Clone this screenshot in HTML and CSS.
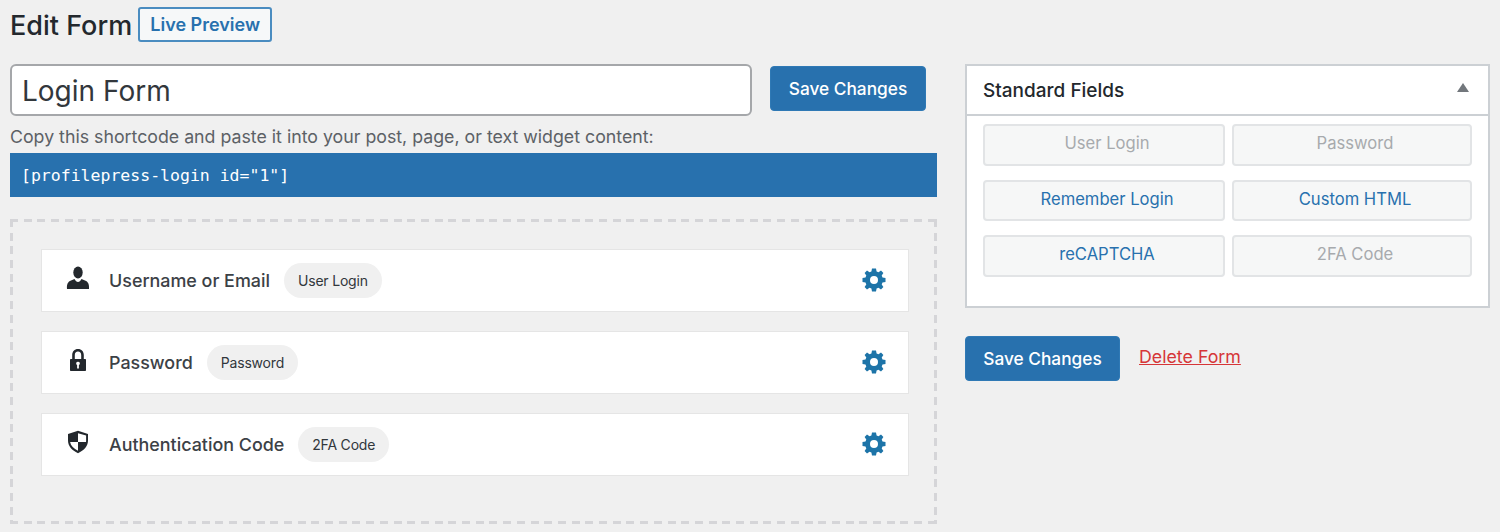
FILE: index.html
```html
<!DOCTYPE html>
<html lang="en-US">
<head>
  <meta charset="UTF-8">
  <title>Edit Form</title>
  <link rel="stylesheet" href="styles.css">
</head>
<body>
  <header class="page-title">
    <h1>Edit Form</h1>
    <a class="preview" href="#">Live Preview</a>
  </header>
  <div class="columns">
    <main class="main">
      <div class="title-row">
        <input class="title-input" type="text" value="Login Form">
        <button class="primary save-top">Save Changes</button>
      </div>
      <p class="hint">Copy this shortcode and paste it into your post, page, or text widget content:</p>
      <div class="shortcode">[profilepress-login id="1"]</div>
      <section class="dropzone">
        <div class="field">
          <svg class="field-icon" viewBox="0 0 24 24"><ellipse cx="12" cy="6.500" rx="4.700" ry="6"/><path d="M1 23c-.4-5 1-7.500 4-8.600l3.500-1.400c1 2 2.200 3 3.500 3s2.500-1 3.500-3l3.500 1.400c3 1.100 4.400 3.600 4 8.600z"/></svg>
          <span class="field-name">Username or Email</span>
          <span class="pill">User Login</span>
          <svg class="gear" viewBox="0 0 24 24"><use href="#gear"/></svg>
        </div>
        <div class="field">
          <svg class="field-icon" viewBox="0 0 24 24"><path fill-rule="evenodd" d="M12 1c3.500 0 5.800 2.600 5.800 6v4H19c.6 0 1 .4 1 1v10c0 .6-.4 1-1 1H5c-.6 0-1-.4-1-1V12c0-.6.4-1 1-1h1.200V7c0-3.400 2.300-6 5.800-6zm0 2.500c-2 0-3.200 1.500-3.200 3.500v4h6.400V7c0-2-1.200-3.500-3.200-3.500zm0 10.200a1.800 1.800 0 0 0-.9 3.400V20.500h1.800v-3.400a1.800 1.800 0 0 0-.9-3.400z"/></svg>
          <span class="field-name">Password</span>
          <span class="pill">Password</span>
          <svg class="gear" viewBox="0 0 24 24"><use href="#gear"/></svg>
        </div>
        <div class="field">
          <svg class="field-icon" viewBox="0 0 24 24"><path fill-rule="evenodd" d="M12 .8L22 4v6.500c0 5.500-4 10-10 12.700C6 20.500 2 16 2 10.500V4zM12 3.300V12h8c.1-.5.1-1 .1-1.500V5.600zM4.100 12c.6 3.800 3.700 6.700 7.900 8.800V12z"/></svg>
          <span class="field-name">Authentication Code</span>
          <span class="pill">2FA Code</span>
          <svg class="gear" viewBox="0 0 24 24"><use href="#gear"/></svg>
        </div>
      </section>
    </main>
    <aside class="side">
      <section class="metabox">
        <h2 class="metabox-head">Standard Fields <span class="arrow"></span></h2>
        <div class="field-buttons">
          <span class="field-btn off">User Login</span>
          <span class="field-btn off">Password</span>
          <span class="field-btn">Remember Login</span>
          <span class="field-btn">Custom HTML</span>
          <span class="field-btn">reCAPTCHA</span>
          <span class="field-btn off">2FA Code</span>
        </div>
      </section>
      <div class="side-actions">
        <button class="primary save-side">Save Changes</button>
        <a class="delete" href="#">Delete Form</a>
      </div>
    </aside>
  </div>
  <svg class="defs" width="0" height="0">
    <symbol id="gear" viewBox="0 0 24 24">
      <path fill-rule="evenodd" d="M10 .5h4l.6 3 1.900.8L19 2.600 21.400 5l-1.700 2.500.8 1.900 3 .6v4l-3 .6-.8 1.900 1.700 2.500L19 21.400l-2.500-1.700-1.900.8-.6 3h-4l-.6-3-1.900-.8L5 21.400 2.600 19l1.700-2.500-.8-1.900-3-.6v-4l3-.6.8-1.900L2.600 5 5 2.600l2.500 1.700 1.900-.8zM12 8a4 4 0 1 0 0 8 4 4 0 0 0 0-8z"/>
    </symbol>
  </svg>
</body>
</html>
```

FILE: styles.css
```css
body {
  background: #f0f0f0;
  color: #23282d;
  font-family: Inter, "Noto Sans", sans-serif;
  margin: 0;
  padding: 8px 10px 0;
  overflow: hidden;
}
.page-title {
  align-items: center;
  display: flex;
  gap: 6px;
  height: 34px;
}
h1 {
  font-size: 27px;
  font-weight: 500;
  margin: 0;
}
.preview {
  background: #f6f8f9;
  border: 2px solid #4a8cc0;
  border-radius: 3px;
  box-sizing: border-box;
  color: #2871ae;
  font-size: 18px;
  font-weight: 600;
  height: 35px;
  line-height: 32px;
  margin-top: -1px;
  text-align: center;
  text-decoration: none;
  width: 134px;
}
.columns {
  display: flex;
  gap: 28px;
  margin-top: 22px;
}
.main { width: 927px; }
.title-row {
  align-items: flex-start;
  display: flex;
  gap: 18px;
}
.title-input {
  background: #fff;
  border: 2px solid #a5a7aa;
  border-radius: 6px;
  box-sizing: border-box;
  color: #32373c;
  font-family: inherit;
  font-size: 28px;
  height: 52px;
  padding: 1px 10px 0;
  width: 742px;
}
.primary {
  background: #2871ae;
  border: 1px solid #2f79b5;
  border-radius: 4px;
  box-sizing: border-box;
  color: #fff;
  font-family: inherit;
  font-size: 17.3px;
  font-weight: 500;
  height: 45px;
  padding: 0;
}
.save-top {
  margin-top: 2px;
  width: 156px;
}
.hint {
  color: #5c6166;
  font-size: 17.75px;
  line-height: 22px;
  margin: 10px 0 5px;
}
.shortcode {
  background: #2871ae;
  color: #fff;
  font-family: "DejaVu Sans Mono", "Liberation Mono", monospace;
  font-size: 16.5px;
  height: 44px;
  line-height: 46px;
  padding-left: 11px;
}
.dropzone {
  background:
    repeating-linear-gradient(90deg, #d5d5d8 0 8px, transparent 8px 13.7px) 0 0 / 100% 3px no-repeat,
    repeating-linear-gradient(90deg, #d5d5d8 0 8px, transparent 8px 13.7px) 0 100% / 100% 3px no-repeat,
    repeating-linear-gradient(180deg, #d5d5d8 0 8px, transparent 8px 13.7px) 0 0 / 3px 100% no-repeat,
    repeating-linear-gradient(180deg, #d5d5d8 0 8px, transparent 8px 13.7px) 100% 0 / 3px 100% no-repeat;
  box-sizing: border-box;
  display: flex;
  flex-direction: column;
  gap: 19px;
  height: 305px;
  margin-top: 22px;
  padding: 30px 28px 0 31px;
}
.field {
  align-items: center;
  background: #fff;
  border: 1px solid #e5e5e5;
  box-sizing: border-box;
  display: flex;
  height: 63px;
  padding: 0 22px 0 24px;
}
.field-icon {
  fill: #23282d;
  flex: none;
  height: 24px;
  margin-top: -6px;
  width: 24px;
}
.field-name {
  color: #3c4146;
  font-size: 17.9px;
  font-weight: 500;
  margin-left: 19px;
}
.pill {
  background: #f0f0f0;
  border-radius: 18px;
  color: #32373c;
  font-size: 14px;
  height: 35px;
  letter-spacing: -0.2px;
  line-height: 35px;
  margin-left: 14px;
  padding: 0 14px;
}
.gear {
  fill: #1d74a8;
  height: 24px;
  margin-left: auto;
  margin-top: -2px;
  width: 24px;
}
.side { width: 525px; }
.metabox {
  background: #fff;
  border: 2px solid #ccd0d4;
  box-sizing: border-box;
  height: 244px;
}
.metabox-head {
  align-items: center;
  border-bottom: 2px solid #ccd0d4;
  box-sizing: content-box;
  display: flex;
  font-size: 19px;
  font-weight: 500;
  height: 47px;
  justify-content: space-between;
  margin: 0;
  padding: 1px 19px 0 16px;
}
.arrow {
  border-bottom: 9px solid #72777c;
  border-left: 6px solid transparent;
  border-right: 6px solid transparent;
  margin-bottom: 6px;
}
.field-buttons {
  display: grid;
  gap: 14px 7px;
  grid-template-columns: 242px 240px;
  padding: 8px 16px;
}
.field-btn {
  background: #f6f7f7;
  border: 2px solid #e2e4e6;
  border-radius: 4px;
  box-sizing: border-box;
  color: #2871ae;
  font-size: 16.6px;
  height: 41.5px;
  line-height: 34px;
  padding-left: 6px;
  text-align: center;
}
.field-btn.off { color: #a7aaad; }
.side-actions {
  align-items: flex-start;
  display: flex;
  gap: 19px;
  margin-top: 28px;
}
.save-side { width: 155px; }
.delete {
  color: #d63638;
  font-size: 17.8px;
  line-height: 42px;
}
.defs { position: absolute; }
```
